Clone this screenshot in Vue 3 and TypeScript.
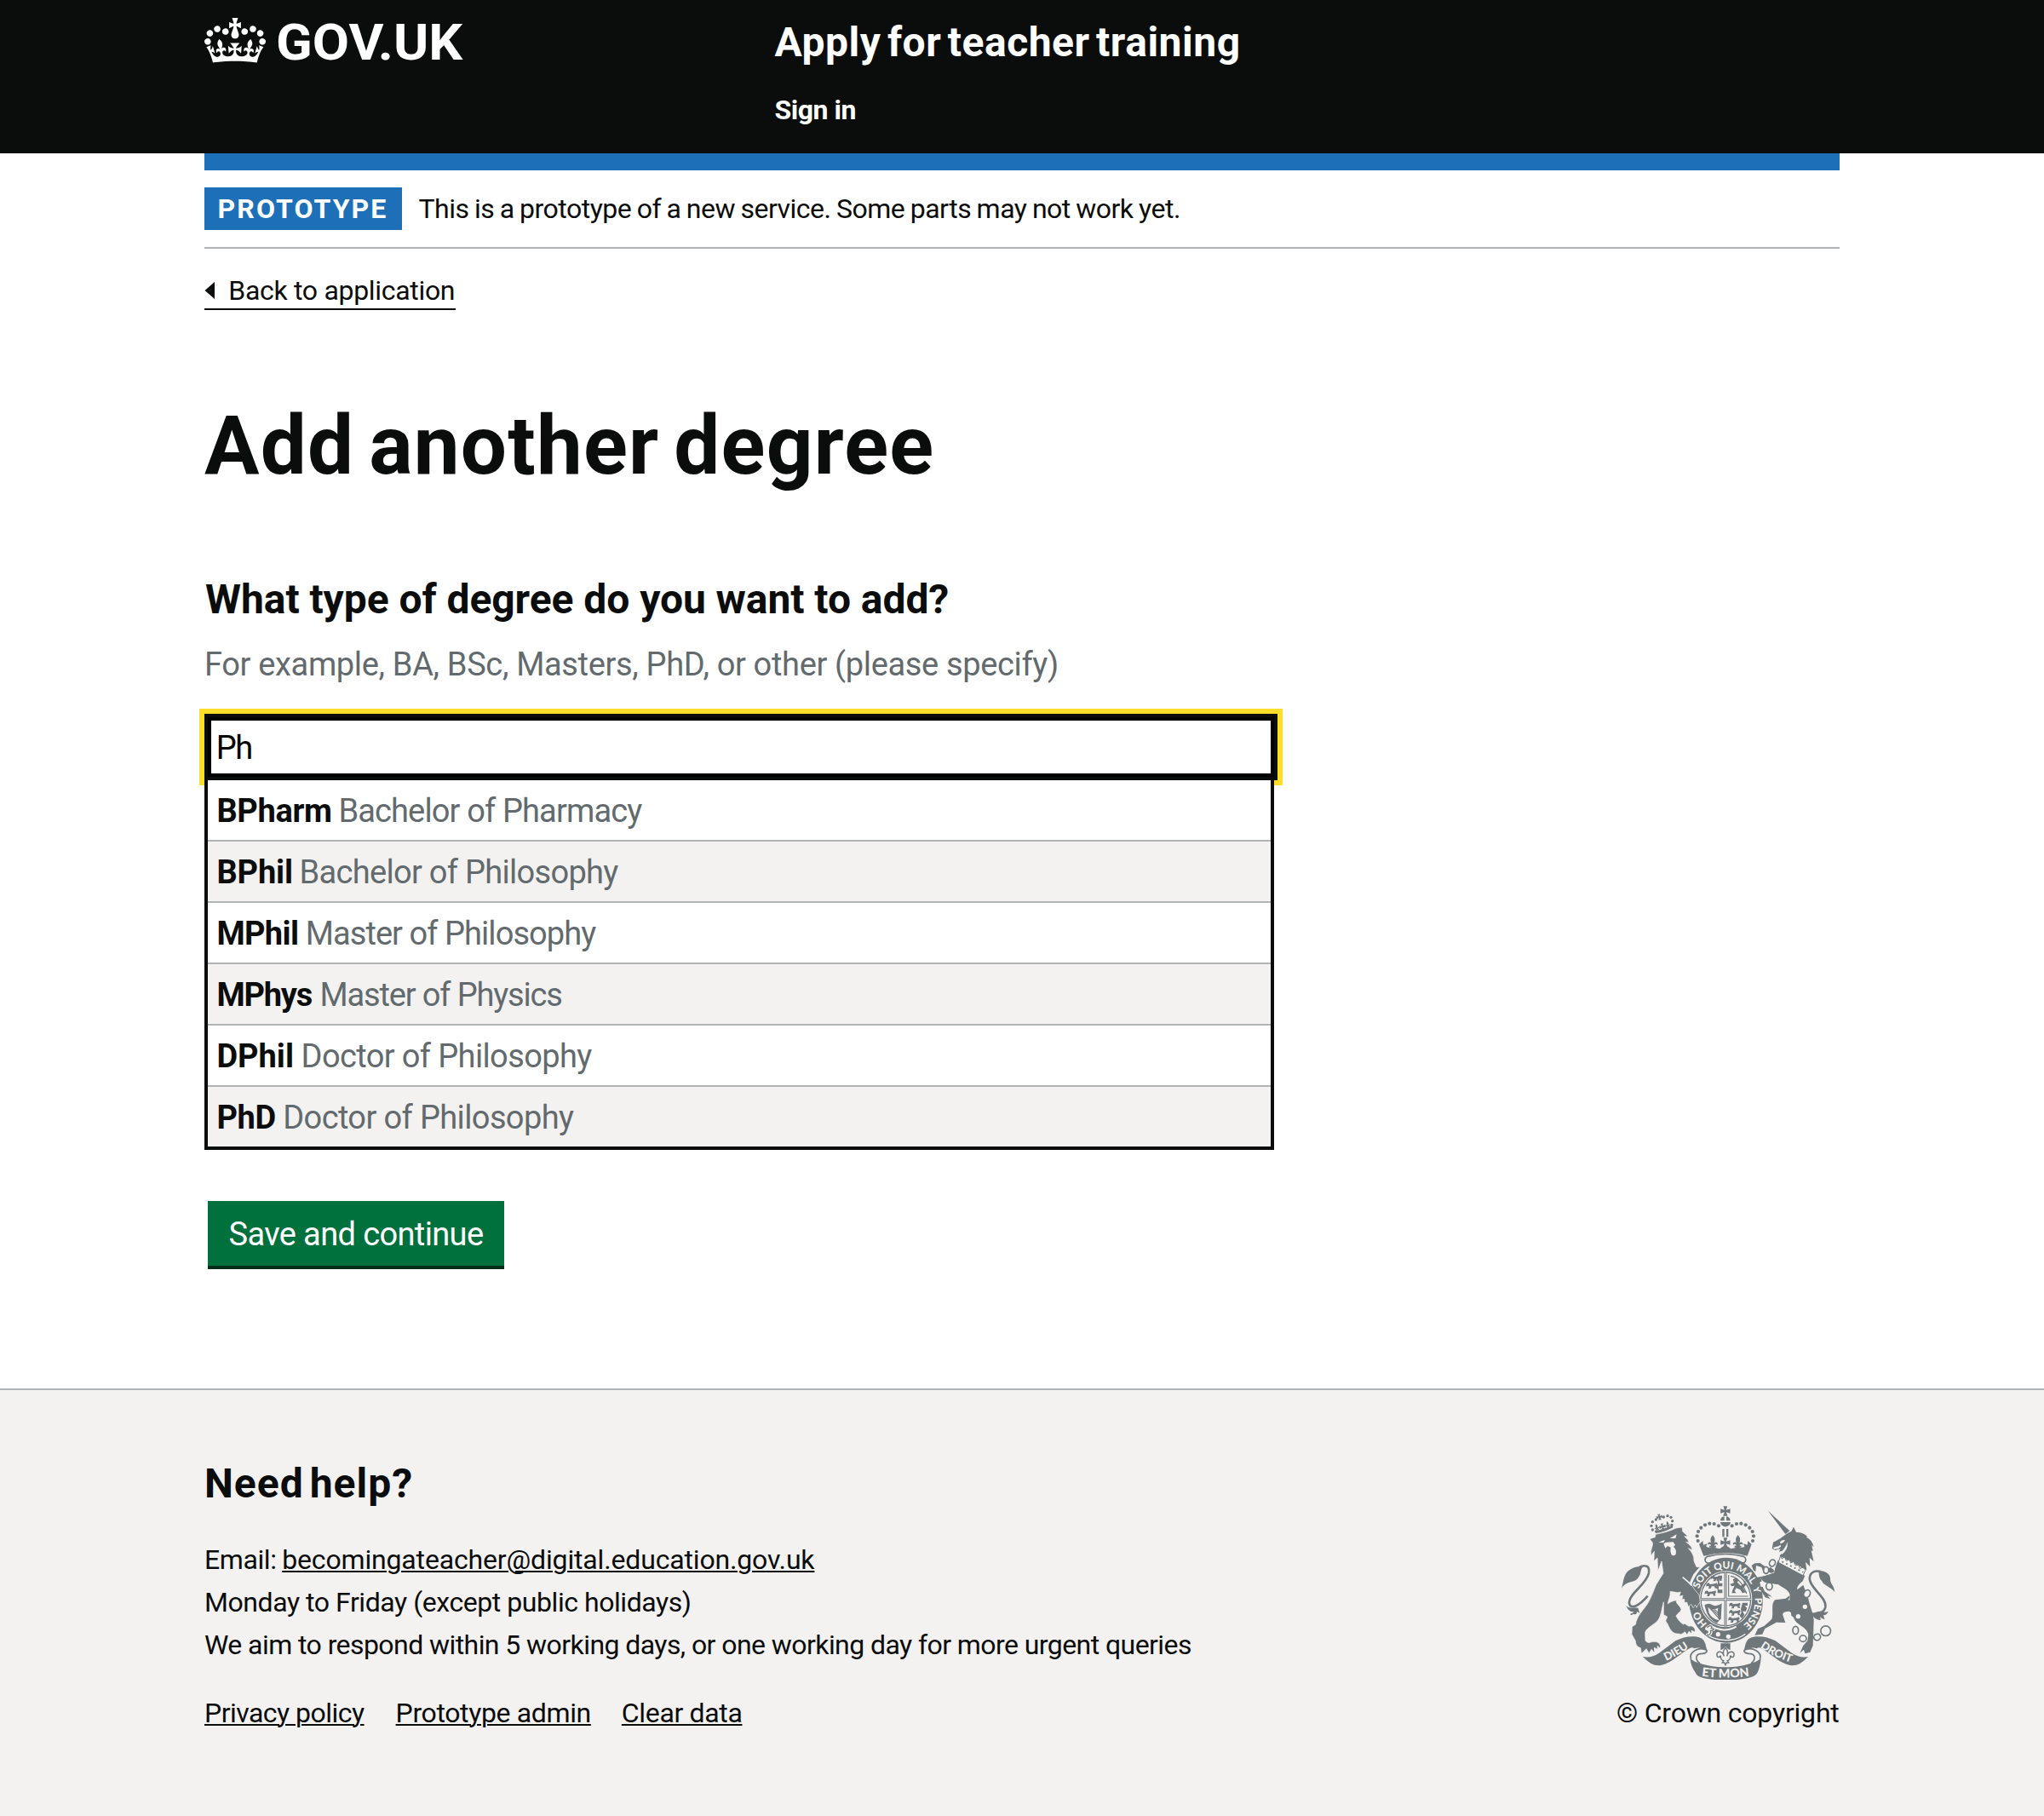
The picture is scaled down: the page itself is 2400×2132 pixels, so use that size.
<script setup lang="ts">
import { ref } from 'vue'

interface Degree {
  abbr: string
  name: string
  abbrWidth: number
  abbrTracking: number
  nameTracking: number
}

const query = ref('Ph')

const degrees: Degree[] = [
  { abbr: 'BPharm', name: 'Bachelor of Pharmacy', abbrWidth: 143, abbrTracking: -0.34, nameTracking: -0.86 },
  { abbr: 'BPhil', name: 'Bachelor of Philosophy', abbrWidth: 97.2, abbrTracking: -0.1, nameTracking: -0.7 },
  { abbr: 'MPhil', name: 'Master of Philosophy', abbrWidth: 104.4, abbrTracking: -0.65, nameTracking: -0.94 },
  { abbr: 'MPhys', name: 'Master of Physics', abbrWidth: 121.2, abbrTracking: -1.2, nameTracking: -1.16 },
  { abbr: 'DPhil', name: 'Doctor of Philosophy', abbrWidth: 99.2, abbrTracking: 0, nameTracking: -0.62 },
  { abbr: 'PhD', name: 'Doctor of Philosophy', abbrWidth: 77.9, abbrTracking: -0.3, nameTracking: -0.62 },
]

// Left half of the pearls on the royal crown; the right half mirrors them
const pearls = [[311, 176], [308, 159], [312, 143], [322, 130], [336, 120], [352, 115], [368, 116], [384, 123]]
const lionPearls = [[151, 137], [147, 123], [151, 109], [163, 101], [190, 92], [204, 88], [216, 93], [221, 106], [219, 120]]
</script>

<template>
  <div class="page">
    <header class="header">
      <div class="container header-row">
        <a class="logo">
          <svg class="crown" viewBox="0 0 132 97" width="72" height="53" aria-hidden="true">
            <path
              fill="currentColor"
              fill-rule="evenodd"
              d="M25 30.2c3.5 1.5 7.7-.2 9.1-3.7 1.5-3.6-.2-7.8-3.9-9.2-3.6-1.4-7.6.3-9.1 3.9-1.4 3.5.3 7.5 3.9 9zM9 39.5c3.6 1.5 7.8-.2 9.2-3.7 1.5-3.6-.2-7.8-3.9-9.1-3.6-1.5-7.6.2-9.1 3.8-1.4 3.5.3 7.5 3.8 9zM4.4 57.2c3.5 1.5 7.7-.2 9.1-3.8 1.5-3.6-.2-7.7-3.9-9.1-3.5-1.5-7.6.3-9.1 3.8-1.4 3.5.3 7.6 3.9 9.1zm38.3-21.4c3.5 1.5 7.7-.2 9.1-3.8 1.5-3.6-.2-7.7-3.9-9.1-3.6-1.5-7.6.3-9.1 3.8-1.3 3.6.4 7.7 3.9 9.1zm64.4-5.6c-3.6 1.5-7.8-.2-9.1-3.7-1.5-3.6.2-7.8 3.8-9.2 3.6-1.4 7.7.3 9.2 3.9 1.3 3.5-.4 7.5-3.9 9zm15.9 9.3c-3.6 1.5-7.7-.2-9.1-3.7-1.5-3.6.2-7.8 3.7-9.1 3.6-1.5 7.7.2 9.2 3.8 1.5 3.5-.3 7.5-3.8 9zm4.7 17.7c-3.6 1.5-7.8-.2-9.2-3.8-1.5-3.6.2-7.7 3.9-9.1 3.6-1.5 7.7.3 9.2 3.8 1.3 3.5-.4 7.6-3.9 9.1zM89.3 35.8c-3.6 1.5-7.8-.2-9.2-3.8-1.4-3.6.2-7.7 3.9-9.1 3.6-1.5 7.7.3 9.2 3.8 1.4 3.6-.3 7.7-3.9 9.1zM69.7 17.7l8.9 4.7V9.3l-8.9 2.8c-.2-.3-.5-.6-.9-.9L72.4 0H59.6l3.5 11.2c-.3.3-.6.5-.9.9l-8.8-2.8v13.1l8.8-4.7c.3.3.6.7.9.9l-5 15.4v.1c-.2.8-.4 1.6-.4 2.4 0 4.1 3.1 7.5 7 8.1h.2c.3 0 .7.1 1 .1.4 0 .7 0 1-.1h.2c4-.6 7.1-4.1 7.1-8.1 0-.8-.1-1.7-.4-2.4V34l-5.1-15.4c.4-.2.7-.6 1-.9zM66 92.8c16.9 0 32.8 1.1 47.1 3.2 4-16.9 8.9-26.7 14-33.5l-9.6-3.4c1 4.9 1.1 7.2 0 10.2-1.5-1.4-3-4.3-4.2-8.7L108.6 76c2.8-2 5-3.2 7.5-3.3-4.4 9.4-10 11.9-13.6 11.2-4.3-.8-6.3-4.6-5.6-7.9 1-4.7 5.7-5.9 8-.5 4.3-8.7-3-11.4-7.6-8.8 7.1-7.2 7.9-13.5 2.1-21.1-8 6.1-8.1 12.3-4.5 20.8-4.7-5.4-12.1-2.5-9.5 6.2 3.4-5.2 7.9-2 7.2 3.1-.6 4.3-6.4 7.8-13.5 7.2-10.3-.9-10.9-8-11.2-13.8 2.5-.5 7.1 1.8 11 7.3L80.2 60c-4.1 4.4-8 5.3-12.3 5.4 1.4-4.4 8-11.6 8-11.6H55.5s6.4 7.2 7.9 11.6c-4.2-.1-8-1-12.3-5.4l1.4 16.4c3.9-5.5 8.5-7.7 10.9-7.3-.3 5.8-.9 12.8-11.1 13.8-7.2.6-12.9-2.9-13.5-7.2-.7-5 3.8-8.3 7.1-3.1 2.7-8.7-4.6-11.6-9.4-6.2 3.7-8.5 3.6-14.7-4.6-20.8-5.8 7.6-5 13.9 2.2 21.1-4.7-2.6-11.9.1-7.7 8.8 2.3-5.5 7.1-4.2 8.1.5.7 3.3-1.3 7.1-5.7 7.9-3.5.7-9-1.8-13.5-11.2 2.5.1 4.7 1.3 7.5 3.3l-4.7-15.4c-1.2 4.4-2.7 7.2-4.3 8.7-1.1-3-.9-5.3 0-10.2l-9.5 3.4c5 6.9 9.9 16.7 14 33.5 14.8-2.1 30.8-3.2 47.7-3.2z"
            />
          </svg>
          <span class="wordmark">GOV.UK</span>
        </a>
        <div class="header-content">
          <a class="product">Apply for teacher training</a>
          <nav><a class="signin">Sign in</a></nav>
        </div>
      </div>
    </header>

    <div class="container">
      <div class="bluebar"></div>
      <div class="phase">
        <strong class="tag">PROTOTYPE</strong>
        <span class="phase-text">This is a prototype of a new service. Some parts may not work yet.</span>
      </div>

      <a class="back">
        <svg width="12" height="20" viewBox="0 0 12 20" aria-hidden="true"><path d="M12 0v20L.5 10z" fill="#0b0c0c" /></svg>
        <span>Back to application</span>
      </a>

      <main>
        <h1>Add another degree</h1>
        <label class="question" for="degree">What type of degree do you want to add?</label>
        <div class="hint">For example, BA, BSc, Masters, PhD, or other (please specify)</div>
        <input id="degree" v-model="query" class="field" type="text" autocomplete="off" />
        <ul class="menu">
          <li v-for="d in degrees" :key="d.abbr">
            <strong :style="{ width: d.abbrWidth + 'px', letterSpacing: d.abbrTracking + 'px' }">{{ d.abbr }}</strong>
            <span :style="{ letterSpacing: d.nameTracking + 'px' }">{{ d.name }}</span>
          </li>
        </ul>
        <button class="button" type="button">Save and continue</button>
      </main>
    </div>

    <footer class="footer">
      <div class="container footer-row">
        <div class="support">
          <h2>Need help?</h2>
          <ul class="contact">
            <li><span class="email-label">Email:</span><a class="email">becomingateacher@digital.education.gov.uk</a></li>
            <li class="hours">Monday to Friday (except public holidays)</li>
            <li class="reply">We aim to respond within 5 working days, or one working day for more urgent queries</li>
          </ul>
          <nav class="links">
            <a class="l1">Privacy policy</a>
            <a class="l2">Prototype admin</a>
            <a class="l3">Clear data</a>
          </nav>
        </div>

        <div class="copyright">
          <svg class="arms" viewBox="42 53 750 612" width="250" height="204" aria-hidden="true">
            <defs>
              <path id="garter" d="M410 494 A102 110 0 0 1 410 274 A102 110 0 0 1 410 494" />
              <path id="dieu" d="M184 605 Q240 583 292 543" />
              <path id="droit" d="M522 545 Q575 586 648 607" />
              <path id="mon" d="M316 651 Q408 664 500 651" />
              <g id="cross">
                <path d="M-7 -17H7L3 -4L17 -8V8L3 4L8 17H-8L-3 4L-17 8V-8L-3 -4Z" />
              </g>
              <g id="fleur">
                <path d="M0 -25C10 -14 9 -6 4 4C10 -5 20 0 17 10C13 4 7 6 6 12H12V18H-12V12H-6C-7 6 -13 4 -17 10C-20 0 -10 -5 -4 4C-9 -6 -10 -14 0 -25Z" />
              </g>
              <g id="passant">
                <path d="M2 4L10 2L13 7L30 5L38 2L40 9L36 13L39 20L31 21L29 14L19 14L16 22L7 22L11 16L5 12L0 15V9Z" />
              </g>
            </defs>

            <!-- Royal crown -->
            <g class="ink">
              <use href="#cross" x="407.5" y="71" />
              <path d="M390 105C390 96 396 91 404 90V105ZM411 90C419 91 425 96 425 105H411ZM390 110H426C424 121 416 126 408 126S392 121 390 110Z" />
              <g v-for="p in pearls" :key="p[0]">
                <circle :cx="p[0]" :cy="p[1]" r="6.3" />
                <circle :cx="815 - p[0]" :cy="p[1]" r="6.3" />
              </g>
              <path d="M397 134H404V162H397ZM411 134H418V162H411Z" />
              <use href="#cross" x="407.5" y="182" />
              <use href="#fleur" x="363" y="181" />
              <use href="#fleur" x="452" y="181" />
              <path d="M315 188L328 176L330 190L343 186L340 197L354 201Q363 192 373 201L388 204Q398 194 407 194Q417 194 427 204L442 201Q452 192 461 201L475 197L472 186L485 190L487 176L500 188L485 229Q407 208 331 229Z" />
            </g>
            <path class="line" stroke-width="5" d="M350 255C334 254 332 238 344 231Q407 214 472 231C484 238 481 254 466 255" />

            <!-- Garter -->
            <ellipse class="ink" cx="410" cy="385" rx="130" ry="150" />
            <ellipse class="paper" cx="409" cy="381" rx="93" ry="99" />
            <ellipse class="line" cx="409" cy="381" rx="88" ry="94" stroke-width="4" />

            <!-- Shield quarters -->
            <path class="line" stroke-width="9" d="M408 285V478M320 382H498" />
            <path class="light" stroke-width="2.5" d="M408 285V478M320 382H498" />
            <g class="ink">
              <use href="#passant" x="357" y="296" />
              <use href="#passant" x="340" y="322" />
              <use href="#passant" x="335" y="349" />
              <path d="M384 298H396V310H386V325H397V336H384V348H397V360H380V345H376V330H381V318H377V306Z" />
              <use href="#passant" x="421" y="392" />
              <use href="#passant" x="421" y="417" />
              <use href="#passant" x="418" y="442" />
              <path d="M468 394H486V404H476L484 412L480 424H468L475 436L466 450L458 440L464 428L462 416Z" />
              <path d="M434 312L446 306L454 314L450 322L462 334L474 326L470 316L478 318L480 332L470 342L476 352L484 356L468 360L460 348L446 342L440 352L446 360L430 360L434 346L440 334L430 336L424 328L438 324Z" />
              <path d="M334 402Q350 392 362 402Q378 410 395 396L392 452L384 456L380 430L382 412Q362 422 346 410L350 430Q360 450 386 456L378 466Q346 450 340 422Z" />
            </g>
            <path class="line" stroke-width="3.5" d="M419 296V371H488M426 300Q462 306 482 362M352 412L384 448M360 415L383 438M369 417L383 430" />

            <!-- Strap and buckle -->
            <path class="ink" d="M346 468C380 488 430 486 462 462L480 508C440 544 380 540 340 506Z" />
            <path class="light" stroke-width="6" d="M352 472C385 494 420 494 446 478" />
            <path class="light" stroke-width="4" d="M340 503C375 532 440 534 478 504" />
            <path class="paper" d="M341 478C352 466 368 470 364 482C378 482 372 496 362 494C364 510 346 516 338 506C348 502 350 496 344 492C334 490 334 482 341 478Z" />
            <path class="line" stroke-width="4" d="M343 481C354 470 364 476 358 484C372 484 368 492 356 492C358 506 348 510 342 506" />
            <circle class="paper" cx="382" cy="505" r="8" />
            <circle class="paper" cx="418" cy="513" r="8" />

            <!-- Lion -->
            <g class="ink">
              <circle v-for="p in lionPearls" :key="p[0] * 1000 + p[1]" :cx="p[0]" :cy="p[1]" r="5" />
              <use href="#cross" transform="translate(175 92) rotate(-14) scale(.62)" />
              <use href="#cross" transform="translate(186 126) rotate(-14) scale(.66)" />
              <use href="#fleur" transform="translate(166 129) rotate(-14) scale(.5)" />
              <use href="#fleur" transform="translate(205 119) rotate(-14) scale(.5)" />
              <path d="M158 140Q190 136 221 121L223 129Q192 146 162 149Z" />
              <path
                stroke="#f3f2f1"
                stroke-width="2"
                d="M141 169L160 163L162 153Q205 145 234 131L255 128L257 143L276 160L263 160Q279 172 279 182L269 180Q291 196 291 208L277 202Q298 222 297 247L306 268L318 268L296 294L283 322L299 347L315 366L319 390L306 411L302 401L294 412L287 399L277 408L272 392L264 394L263 381L254 382L258 369L245 371L250 356L240 358L213 354C216 370 206 384 205 398C210 392 226 386 236 385C229 394 248 403 252 417C251 427 237 432 234 441C240 453 250 465 260 470C267 462 275 482 285 475C300 478 303 490 300 497L288 491L290 503L279 495L273 507L265 496Q252 509 244 503C222 506 211 486 205 470L197 458L203 443L190 436L190 391C183 415 181 447 166 460C150 475 128 484 125 499L126 528C139 541 143 530 158 531C173 531 181 542 178 554L168 546L169 558L157 552L158 570L147 558L139 572L129 556L112 573L109 553C92 548 92 536 91 528L78 505L79 478L91 471C97 438 116 424 133 398C148 374 156 348 164 330L189 290L183 248L170 282L168 236L156 247L157 213L146 228C142 208 154 194 151 182Z"
              />
              <path d="M42 343C50 318 48 290 74 276C90 264 105 266 117 268C107 278 112 292 101 305C88 327 61 313 42 343Z" />
              <path d="M58 404C72 417 83 410 100 412L106 431L96 425Q96 439 83 433Q76 441 72 433Q82 431 86 425Q67 429 58 404Z" />
            </g>
            <path class="line" stroke-width="8" d="M104 269C124 259 142 263 138 289C130 330 66 362 69 397C74 418 102 407 134 370" />
            <g class="paper">
              <path d="M172 181L195 172L190 182ZM212 167L236 153L232 167ZM190 186L198 181L224 180L231 190L225 197Q237 207 233 223Q225 232 217 224Q212 213 215 199L204 194L196 202Z" />
            </g>
            <path class="light" stroke-width="5" d="M257 304Q275 318 290 334" />

            <g class="motto" text-anchor="middle" font-size="35">
              <text><textPath href="#garter" startOffset="15%">HO</textPath></text>
              <text><textPath href="#garter" startOffset="36.8%">SOIT</textPath></text>
              <text><textPath href="#garter" startOffset="48.8%">QUI</textPath></text>
              <text><textPath href="#garter" startOffset="60.8%">MAL</textPath></text>
              <text><textPath href="#garter" startOffset="70%">Y</textPath></text>
              <text><textPath href="#garter" startOffset="82%">PENSE</textPath></text>
            </g>

            <!-- Unicorn -->
            <g class="ink">
              <path d="M557 69L634 141L619 152Z" />
              <path d="M572 203L576 181L602 167L625 150L640 142L648 127L657 145Q687 147 697 162L692 163Q714 172 719 198L712 191L716 212L710 210L719 249L704 235L706 267L690 250L694 279L599 229L609 211L596 214L602 204L583 209Z" />
              <path d="M593 247C586 258 583 270 582 282Q571 295 559 285L543 291L535 269L516 263L514 285L506 279L500 262L512 255L530 254L548 267L552 280L566 268L577 277L586 299L572 319L548 322Q538 319 531 304L536 318L526 324L529 337L539 338L546 354L573 373L556 369L566 381L548 375L520 330L499 317L517 305L537 301L577 293L578 316C599 338 632 345 635 366C635 386 621 389 602 391C581 396 577 414 590 430L590 462L547 485L538 505L511 508L522 486L545 475L571 452C579 432 566 400 582 384L620 379L682 331L700 380C704 405 718 429 719 456L716 545L706 568L688 573L684 559L670 571L682 545L697 528L700 505C694 483 670 475 657 462C644 446 643 421 626 425Q613 425 609 434L619 464L590 463L580 433L580 400L602 386L636 384L640 330Z" />
              <path d="M540 301L592 284L592 330L548 322Z" />
              <path d="M593 244L688 299L680 318C656 338 657 347 669 355C684 366 698 398 700 430L680 462L640 440L634 380L637 350L582 316L580 285Z" />
              <path d="M735 282C761 278 780 295 777 313C779 329 792 334 792 356C779 338 750 331 748 318C735 307 739 292 735 282Z" />
              <path d="M701 424C722 437 724 423 742 424Q760 430 770 424Q766 437 753 438L757 453Q746 450 742 444L743 456Q723 453 716 441Q707 439 701 424Z" />
            </g>
            <path class="line" stroke-width="8" d="M744 284C708 276 700 302 707 320C718 351 764 377 760 409Q757 423 744 428" />
            <path class="paper" d="M600 180Q609 170 618 174Q614 183 602 186ZM576 199L595 195L601 190L604 195L594 204L579 205ZM626 180Q630 207 607 223L598 220Q619 205 626 180Z" />
            <path class="paper" stroke="#6f777b" stroke-width="3" d="M602 229L607 239L616 232L622 246L633 242L638 254L648 249L655 263L665 260L670 273L681 270L690 279L681 298L594 252Z" />
            <path class="line" stroke-width="5" stroke-dasharray="6 10" d="M607 249L682 286" />
            <g class="chain">
              <ellipse cx="573" cy="254" rx="10" ry="12" transform="rotate(30 573 254)" />
              <ellipse cx="551" cy="279" rx="9" ry="12" />
              <ellipse cx="562" cy="336" rx="11" ry="13" />
              <ellipse cx="695" cy="362" rx="11" ry="14" transform="rotate(25 695 362)" />
              <ellipse cx="655" cy="491" rx="10" ry="14" />
              <ellipse cx="681" cy="520" rx="12" ry="11" />
              <ellipse cx="731" cy="515" rx="12" ry="11" transform="rotate(-30 731 515)" />
              <circle cx="761" cy="493" r="17.5" />
            </g>
            <circle class="paper" cx="688" cy="408" r="8" />
            <circle class="paper" cx="664" cy="442" r="8" />

            <!-- Motto ribbon -->
            <g class="ink">
              <path d="M117 584Q146 590 174 571L232 528Q266 510 302 513Q331 516 337 538L343 562Q317 548 298 555Q289 549 283 554C250 570 223 605 181 614Q149 620 117 584Z" />
              <path d="M699 584Q670 590 642 571L584 528Q550 510 514 513Q485 516 479 538L473 562Q499 548 518 555Q527 549 533 554C566 570 593 605 635 614Q667 620 699 584Z" />
              <path d="M283 590L300 601Q408 641 516 601L533 590Q530 622 520 641Q507 666 408 666Q309 666 303 641Q287 621 283 590Z" />
              <path d="M391 537H425V561L417 557L408 548L399 557L391 561Z" />
            </g>
            <path class="line" stroke-width="5" d="M342 561C314 547 277 568 287 592M342 561C345 570 332 574 318 574C300 578 303 598 318 607" />
            <path class="line" stroke-width="5" d="M474 561C502 547 539 568 529 592M474 561C471 570 484 574 498 574C516 578 513 598 498 607" />
            <path class="line" stroke-width="4.5" d="M408 552C397 565 399 574 403 582C398 562 375 563 378 578C379 589 388 587 391 580C390 591 396 597 401 598L397 605H404L408 613L412 605H419L415 598C420 597 426 591 425 580C428 587 437 589 438 578C441 563 418 562 413 582C417 574 419 565 408 552Z" />
            <g class="motto" text-anchor="middle" font-size="39">
              <text><textPath href="#dieu" startOffset="50%">DIEU</textPath></text>
              <text><textPath href="#droit" startOffset="50%">DROIT</textPath></text>
              <text font-size="43"><textPath href="#mon" startOffset="50%">ET MON</textPath></text>
            </g>
          </svg>
          <div class="crown-copyright">© Crown copyright</div>
        </div>
      </div>
    </footer>
  </div>
</template>

<style>
body {
  margin: 0;
  background: #fff;
}
</style>

<style scoped>
.page {
  display: flex;
  flex-direction: column;
  width: 2400px;
  height: 2132px;
  overflow: hidden;
  font-family: Roboto, "Liberation Sans", sans-serif;
  font-size: 32px;
  line-height: 40px;
  color: #0b0c0c;
  white-space: nowrap;
}
.container {
  width: 1920px;
  margin: 0 auto;
}

.header {
  height: 180px;
  background: #0b0c0c;
  color: #fff;
  font-weight: 700;
}
.header-row {
  display: flex;
}
.logo {
  display: flex;
  width: 669.5px;
}
.crown {
  margin-top: 21px;
}
.wordmark {
  margin: 14px 0 0 12px;
  font-size: 60px;
  line-height: 71px;
  transform: scaleX(1.046);
  transform-origin: left;
}
.header-content {
  padding-top: 21px;
}
.product {
  display: block;
  font-size: 48px;
  line-height: 57px;
  letter-spacing: 0.52px;
  word-spacing: -5px;
}
.signin {
  display: block;
  margin-top: 31px;
  letter-spacing: -0.45px;
}

.bluebar {
  height: 20px;
  background: #1d70b8;
}
.phase {
  display: flex;
  padding: 20px 0;
  border-bottom: 2px solid #b1b4b6;
}
.tag {
  box-sizing: border-box;
  width: 232px;
  height: 50px;
  padding: 5px 0 0 15.6px;
  background: #1d70b8;
  color: #fff;
  letter-spacing: 2.08px;
}
.phase-text {
  margin: 5px 0 0 19.5px;
  letter-spacing: -0.5px;
  word-spacing: -1px;
}
.back {
  display: flex;
  align-items: center;
  width: 295px;
  margin-top: 29px;
  padding-bottom: 1px;
  border-bottom: 2px solid #0b0c0c;
}
.back span {
  margin-left: 16.3px;
  letter-spacing: -0.31px;
}

h1 {
  margin: 103px 0 0;
  font-size: 96px;
  line-height: 112px;
  letter-spacing: 1.2px;
  word-spacing: -8px;
}
.question {
  display: block;
  margin: 96px 0 0 1px;
  font-size: 48px;
  font-weight: 700;
  line-height: 57px;
  letter-spacing: -0.06px;
}
.hint {
  margin-top: 24px;
  font-size: 38px;
  line-height: 48px;
  letter-spacing: -0.34px;
  color: #626a6e;
}
.field {
  display: block;
  box-sizing: border-box;
  width: 1260px;
  height: 78px;
  margin: 34px 0 0;
  padding: 1px 9.8px 0;
  border: 4px solid #0b0c0c;
  border-radius: 0;
  outline: none;
  background: #fff;
  box-shadow: inset 0 0 0 4px #000, 0 0 0 6px #ffdd2b;
  color: #000;
  font: 400 38px/44px Roboto, "Liberation Sans", sans-serif;
  letter-spacing: -1.5px;
}
.menu {
  position: relative;
  box-sizing: border-box;
  width: 1256px;
  margin: 0;
  padding: 0;
  border: 4px solid #0b0c0c;
  border-top: 0;
  background: #fff;
  list-style: none;
  font-size: 38px;
  line-height: 48px;
}
.menu li {
  display: flex;
  height: 47px;
  padding: 12px 0 11px 10.4px;
  border-bottom: 2px solid #b1b4b6;
}
.menu li:last-child {
  border-bottom: 0;
}
.menu li:nth-child(even) {
  background: #f3f2f1;
}
.menu strong {
  flex: none;
}
.menu span {
  color: #626a6e;
}
.button {
  display: block;
  box-sizing: border-box;
  width: 348px;
  height: 76px;
  margin: 60px 0 144px 4px;
  padding: 2px 0 0;
  border: 0;
  background: #00703c;
  box-shadow: 0 4px 0 #002d18;
  color: #fff;
  font: 400 38px/74px Roboto, "Liberation Sans", sans-serif;
  letter-spacing: -0.62px;
}

.footer {
  flex: 1;
  border-top: 2px solid #b1b4b6;
  background: #f3f2f1;
}
.footer-row {
  display: flex;
  justify-content: space-between;
}
.support {
  padding-top: 81px;
}
h2 {
  margin: 0;
  font-size: 48px;
  line-height: 57px;
  letter-spacing: 1px;
  word-spacing: -6px;
}
.contact {
  margin: 36px 0 35px;
  padding: 0;
  list-style: none;
  line-height: 50px;
}
.email-label {
  display: inline-block;
  width: 91.2px;
  letter-spacing: -0.4px;
}
.email,
.links a {
  text-decoration: underline;
  text-decoration-thickness: 2px;
  text-underline-offset: 2px;
}
.email {
  letter-spacing: -0.16px;
}
.hours {
  letter-spacing: -0.44px;
}
.reply {
  letter-spacing: -0.57px;
}
.links {
  display: flex;
  gap: 37px;
}
.l1 {
  letter-spacing: -0.53px;
}
.l2 {
  letter-spacing: -0.37px;
}
.l3 {
  margin-left: -1px;
  letter-spacing: -0.35px;
}
.copyright {
  width: 262px;
  padding-top: 136px;
}
.arms {
  display: block;
  margin: 0 0 19px 6px;
}
.crown-copyright {
  letter-spacing: -0.2px;
}
.ink {
  fill: #6f777b;
}
.paper {
  fill: #f3f2f1;
}
.line {
  fill: none;
  stroke: #6f777b;
}
.light {
  fill: none;
  stroke: #f3f2f1;
}
.chain {
  fill: #f3f2f1;
  stroke: #6f777b;
  stroke-width: 5px;
}
.motto {
  fill: #f3f2f1;
  font-family: Lato, "Liberation Sans", sans-serif;
  font-weight: 900;
}
</style>
